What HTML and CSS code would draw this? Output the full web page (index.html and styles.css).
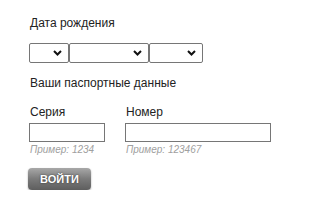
FILE: index.html
```html
<!DOCTYPE html>
<html>
<head>
<meta charset="utf-8">
<link rel="stylesheet" href="styles.css">
</head>
<body>
<div class="form">
  <div class="title">Дата рождения</div>
  <div class="selects">
    <div class="sel sel-day"><svg class="chev" width="9" height="6" viewBox="0 0 9 6"><path d="M1 1 L4.5 4.5 L8 1" fill="none" stroke="#111" stroke-width="2"/></svg></div>
    <div class="sel sel-month"><svg class="chev" width="9" height="6" viewBox="0 0 9 6"><path d="M1 1 L4.5 4.5 L8 1" fill="none" stroke="#111" stroke-width="2"/></svg></div>
    <div class="sel sel-year"><svg class="chev" width="9" height="6" viewBox="0 0 9 6"><path d="M1 1 L4.5 4.5 L8 1" fill="none" stroke="#111" stroke-width="2"/></svg></div>
  </div>
  <div class="title title-pass">Ваши паспортные данные</div>
  <div class="fields">
    <div class="field">
      <div class="label">Серия</div>
      <div class="input input-series"></div>
      <div class="hint">Пример: 1234</div>
    </div>
    <div class="field">
      <div class="label">Номер</div>
      <div class="input input-number"></div>
      <div class="hint">Пример: 123467</div>
    </div>
  </div>
  <div class="btn">ВОЙТИ</div>
</div>
</body>
</html>
```
FILE: styles.css
```css
html, body {
  margin: 0;
  padding: 0;
  background: #fff;
}
.form {
  font-family: "Liberation Sans", Arial, sans-serif;
  color: #222;
  padding: 16px 0 0 29px;
  display: flex;
  flex-direction: column;
  align-items: flex-start;
}
.title {
  font-size: 12px;
  line-height: 15px;
  padding-left: 1px;
}
.selects {
  display: flex;
  margin-top: 12px;
}
.sel {
  box-sizing: border-box;
  height: 20px;
  border: 1px solid #767676;
  border-radius: 2px;
  display: flex;
  align-items: center;
  justify-content: flex-end;
  padding-right: 6px;
  background: #fff;
}
.sel-day { width: 40px; }
.sel-month { width: 80px; }
.sel-year { width: 54px; }
.chev { display: block; }
.title-pass {
  margin-top: 13px;
}
.fields {
  display: flex;
  gap: 20px;
  margin-top: 14px;
}
.field {
  display: flex;
  flex-direction: column;
}
.label {
  font-size: 12px;
  line-height: 15px;
  padding-left: 1px;
}
.input {
  box-sizing: border-box;
  height: 19px;
  border: 1px solid #767676;
  margin-top: 3px;
  background: #fff;
}
.input-series { width: 76px; }
.input-number { width: 146px; }
.hint {
  font-size: 10px;
  line-height: 12px;
  font-style: italic;
  color: #a0a0a0;
  margin-top: 2px;
  padding-left: 1px;
}
.btn {
  margin-top: 12px;
  margin-left: -1px;
  width: 63px;
  height: 22px;
  box-sizing: border-box;
  border-radius: 4px;
  background: linear-gradient(#a8a8a8, #7a7a7a 50%, #5e5e5e);
  box-shadow: 0 1px 2px rgba(0,0,0,0.35);
  color: #fff;
  font-size: 11px;
  font-weight: bold;
  text-shadow: 0 0 2px rgba(0,0,0,0.6);
  display: flex;
  align-items: center;
  justify-content: center;
}
```
